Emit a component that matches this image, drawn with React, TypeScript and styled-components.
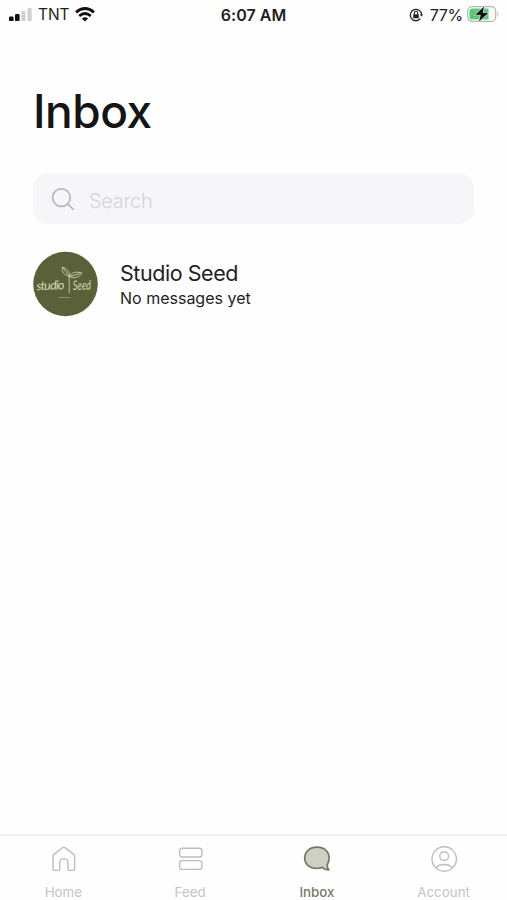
import React from 'react';
import styled, { createGlobalStyle } from 'styled-components';

const GlobalStyle = createGlobalStyle`
  * { box-sizing: border-box; }
  body { margin: 0; background: #fefefe; font-family: Inter, sans-serif; color: #1f1f1f; }
  svg { display: block; }
`;

const Screen = styled.div`
  width: 507px;
  height: 900px;
  display: flex;
  flex-direction: column;
  overflow: hidden;
`;

const StatusBar = styled.header`
  height: 30px;
  display: grid;
  grid-template-columns: 1fr auto 1fr;
  align-items: center;
  padding: 0 7px 0 9px;
  font-size: 16px;
  line-height: 30px;
`;

const StatusGroup = styled.div<{ $end?: boolean }>`
  display: flex;
  align-items: center;
  gap: 6px;
  justify-content: ${p => (p.$end ? 'flex-end' : 'flex-start')};
`;

const Clock = styled.div`
  font-weight: 600;
  font-size: 16px;
  letter-spacing: 0.05px;
  margin-right: 2px;
`;

const Carrier = styled.span`
  font-size: 15.5px;
  letter-spacing: -0.1px;
`;

const Percent = styled.span`
  font-size: 16px;
  letter-spacing: -0.3px;
  margin-right: -2px;
`;

const Content = styled.main`
  flex: 1;
  padding: 52px 33px 0;
`;

const Title = styled.h1`
  margin: 0;
  font-size: 46px;
  line-height: 58px;
  font-weight: 500;
  letter-spacing: -0.5px;
  color: #151515;
`;

const SearchField = styled.div`
  margin-top: 33px;
  height: 51px;
  border-radius: 15px;
  background: #f6f6f9;
  display: flex;
  align-items: center;
  gap: 14px;
  padding-left: 18px;
`;

const Placeholder = styled.span`
  font-size: 20px;
  font-weight: 300;
  letter-spacing: -0.3px;
  color: #d4d4d8;
  padding-top: 4px;
`;

const Conversation = styled.div`
  margin-top: 27px;
  display: flex;
  align-items: center;
  gap: 22px;
`;

const Name = styled.div`
  padding-top: 2px;
  font-size: 21.5px;
  line-height: 26px;
  letter-spacing: -0.45px;
`;

const Preview = styled.div`
  font-size: 16px;
  line-height: 23px;
  padding-top: 1px;
`;

const TabBar = styled.nav`
  height: 66px;
  border-top: 2px solid #f1f1f1;
  display: grid;
  grid-template-columns: repeat(4, 1fr);
`;

const Tab = styled.div<{ $active?: boolean }>`
  display: flex;
  flex-direction: column;
  align-items: center;
  padding-top: 10px;
  gap: 10px;
  font-size: 13.3px;
  line-height: 20px;
  font-weight: ${p => (p.$active ? 500 : 400)};
  letter-spacing: ${p => (p.$active ? '-0.05px' : '0.05px')};
  color: ${p => (p.$active ? '#77796b' : '#c4c4c4')};
`;

const Signal = () => (
  <svg width="23" height="14" viewBox="0 0 23 14">
    <rect x="0" y="8.5" width="4.6" height="4.6" rx="1.2" fill="#111" />
    <rect x="6" y="6" width="4.6" height="7.1" rx="1.2" fill="#111" />
    <rect x="12.3" y="3" width="4.2" height="10.1" rx="1.1" fill="#d0d0d0" />
    <rect x="18.5" y="0" width="4.2" height="13.1" rx="1.1" fill="#d0d0d0" />
  </svg>
);

const Wifi = () => (
  <svg width="20" height="17" viewBox="0 0 20 17" fill="none" stroke="#111" strokeWidth="2.8">
    <path d="M1 5.3Q10-2.2 19 5.3" />
    <path d="M4.2 9Q10 4 15.8 9" />
    <path d="M6.9 11.5Q10 9.1 13.1 11.5L10 14.5Z" fill="#111" stroke="none" />
  </svg>
);

const RotationLock = () => (
  <svg width="15" height="14" viewBox="0 0 15 14" fill="none" stroke="#222">
    <path d="M11.4 10.7A5.7 5.7 0 1 1 12.7 6.5" strokeWidth="1.3" />
    <path d="M10.8 6.3h3.2l-1.5 2.4Z" fill="#222" stroke="none" />
    <rect x="4.2" y="6.3" width="5.6" height="4" rx=".6" fill="#222" stroke="none" />
    <path d="M5.3 6.5V5a1.7 1.7 0 0 1 3.4 0v1.5" strokeWidth="1.1" />
  </svg>
);

const Battery = () => (
  <svg width="33" height="20" viewBox="0 0 33 20">
    <rect x=".7" y="1.7" width="28" height="14.6" rx="4.4" fill="#fff" stroke="#b2b5b2" strokeWidth="1.2" />
    <path d="M5 3.5h16.5v11H5a2.6 2.6 0 0 1-2.6-2.6V6.1A2.6 2.6 0 0 1 5 3.5Z" fill="#5cc878" />
    <path d="M30.4 6.5q2 2.5 0 5Z" fill="#b8b8b8" />
    <path d="M17.6.8 7.6 10.2h5.8l-2 7.2L22 7.6H16Z" fill="#0b0b0b" stroke="#fff" strokeWidth=".6" />
  </svg>
);

const SearchIcon = () => (
  <svg width="24" height="24" viewBox="0 0 24 24" fill="none" stroke="#b9b9bb" strokeWidth="1.8">
    <circle cx="10.4" cy="10.6" r="8.8" />
    <path d="m16.8 17 5.2 5.2" strokeLinecap="round" />
  </svg>
);

const Logo = styled.svg`
  overflow: visible;
  font-family: Lato, sans-serif;
  font-style: italic;
  font-weight: 400;
`;

const StudioLogo = () => (
  <Logo width="65" height="66" viewBox="0 0 65 66">
    <circle cx="32.5" cy="33" r="32.3" fill="#5a6138" />
    <g fill="#d6d9bd" fontSize="12.5">
      <text x="3.5" y="38.8" textLength="28" lengthAdjust="spacing" transform="rotate(-2 17 38)">studio</text>
      <text x="40" y="38.8" fontSize="13" textLength="18" lengthAdjust="spacingAndGlyphs" transform="rotate(-2 49 38)">Seed</text>
    </g>
    <g fill="none" stroke="#cbd0ae" strokeWidth=".9" strokeLinecap="round">
      <path d="M36.2 41.5V26" />
      <path d="M36.5 25.5c-5.5-1.3-8-4.6-7.2-9.5 5.3 1.8 7.5 4.8 7.2 9.5Zm-6-8.2 6 8.2" />
      <path d="M36.5 25.5c2.2-4.8 6.8-5 12.6-3.5-3 4.6-7.6 6-12.6 3.5Zm0 0 10-2.8" />
      <path d="M26 46.5h11" stroke="#8c926e" strokeWidth="1" strokeDasharray="2 .7" />
    </g>
  </Logo>
);

const HomeIcon = () => (
  <svg width="26" height="26" viewBox="0 0 26 26" fill="none" stroke="#bdbdbd" strokeWidth="1.4" strokeLinejoin="round">
    <path d="M3 10.2Q3 9.1 3.9 8.4L12.8 1.5q1-.7 2 0l8.9 6.9q.9.7.9 1.8v12.2q0 2-2 2h-3.2q-1.5 0-1.5-1.5v-6.2a4.1 4.1 0 0 0-8.2 0v6.2q0 1.5-1.5 1.5H5q-2 0-2-2Z" />
  </svg>
);

const FeedIcon = () => (
  <svg width="26" height="26" viewBox="0 0 26 26" fill="none" stroke="#bdbdbd" strokeWidth="1.4">
    <rect x="2.6" y="2.2" width="22.3" height="8.8" rx="2.6" />
    <rect x="2.6" y="14.6" width="22.3" height="8.8" rx="2.6" />
  </svg>
);

const InboxIcon = () => (
  <svg width="28" height="26" viewBox="0 0 28 26" fill="#cdd0c2" stroke="#737761" strokeWidth="1.7" strokeLinejoin="round">
    <path d="M13.9 1.2C6.7 1.2 1.7 5.8 1.7 12c0 6.4 5 10.5 12 10.5 2 0 3.7-.5 5.4-1.1q3 2.7 6.7 2.6-2-2.2-1.5-5.6c1.3-1.8 1.8-3.7 1.8-6.4 0-6.4-5-10.8-12.2-10.8Z" />
  </svg>
);

const AccountIcon = () => (
  <svg width="28" height="26" viewBox="0 0 28 26" fill="none" stroke="#bdbdbd" strokeWidth="1.4">
    <circle cx="14.2" cy="13" r="12.2" />
    <circle cx="14.2" cy="10.1" r="4.4" />
    <path d="M5.9 21.7c4-4.2 12.6-4.2 16.6 0" />
  </svg>
);

const tabs = [
  { label: 'Home', Icon: HomeIcon },
  { label: 'Feed', Icon: FeedIcon },
  { label: 'Inbox', Icon: InboxIcon, active: true },
  { label: 'Account', Icon: AccountIcon },
];

export default function App() {
  return (
    <Screen>
      <GlobalStyle />
      <StatusBar>
        <StatusGroup><Signal /><Carrier>TNT</Carrier><Wifi /></StatusGroup>
        <Clock>6:07 AM</Clock>
        <StatusGroup $end><RotationLock /><Percent>77%</Percent><Battery /></StatusGroup>
      </StatusBar>
      <Content>
        <Title>Inbox</Title>
        <SearchField><SearchIcon /><Placeholder>Search</Placeholder></SearchField>
        <Conversation>
          <StudioLogo />
          <div>
            <Name>Studio Seed</Name>
            <Preview>No messages yet</Preview>
          </div>
        </Conversation>
      </Content>
      <TabBar>
        {tabs.map(({ label, Icon, active }) => (
          <Tab key={label} $active={active}><Icon />{label}</Tab>
        ))}
      </TabBar>
    </Screen>
  );
}
